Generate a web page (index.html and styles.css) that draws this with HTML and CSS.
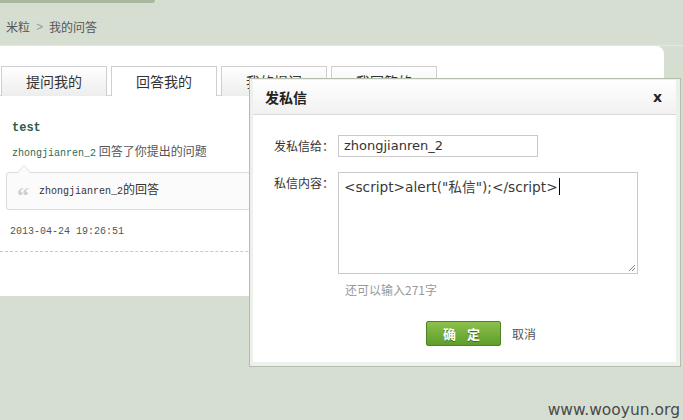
FILE: index.html
```html
<!DOCTYPE html>
<html>
<head>
<meta charset="utf-8">
<link rel="stylesheet" href="styles.css">
</head>
<body>
<div class="topbar"></div>
<div class="crumb"><span>米粒</span><span class="sep">&gt;</span><span>我的问答</span></div>
<div class="panel">
  <div class="tabs">
    <div class="tab">提问我的</div>
    <div class="tab active">回答我的</div>
    <div class="tab">我的提问</div>
    <div class="tab">我回答的</div>
  </div>
  <div class="item">
    <div class="title">test</div>
    <div class="meta"><span class="user">zhongjianren_2</span> 回答了你提出的问题</div>
    <div class="quote">
      <span class="arrow"></span>
      <span class="qmark">“</span><span class="qtext"><span class="mono">zhongjianren_2</span>的回答</span>
    </div>
    <div class="date">2013-04-24 19:26:51</div>
  </div>
</div>

<div class="dialog">
  <div class="dlg-inner">
    <div class="dlg-head">
      <span class="dlg-title">发私信</span>
      <span class="dlg-close">x</span>
    </div>
    <div class="dlg-body">
      <div class="row">
        <span class="label">发私信给：</span>
        <div class="input">zhongjianren_2</div>
      </div>
      <div class="row row2">
        <span class="label">私信内容：</span>
        <div class="textarea">&lt;script&gt;alert("私信");&lt;/script&gt;<span class="caret"></span>
          <svg class="grip" width="8" height="8" viewBox="0 0 8 8"><path d="M1 7 L7 1 M4 7 L7 4" stroke="#888" stroke-width="1" fill="none"/></svg>
        </div>
      </div>
      <div class="count">还可以输入271字</div>
      <div class="actions">
        <span class="btn">确 定</span>
        <span class="cancel">取消</span>
      </div>
    </div>
  </div>
</div>

<div class="wm">www.wooyun.org</div>
</body>
</html>
```
FILE: styles.css
```css
html, body {
  margin: 0;
  padding: 0;
}
body {
  width: 683px;
  height: 420px;
  overflow: hidden;
  background: #d6ded2;
  font-family: "Noto Sans CJK SC", "Liberation Sans", sans-serif;
  color: #333;
  position: relative;
}
.topbar {
  width: 155px;
  height: 3px;
  background: #a8b89e;
  border-bottom-right-radius: 4px;
}
.crumb {
  box-sizing: border-box;
  height: 43px;
  padding: 15px 0 0 6px;
  font-size: 12px;
  line-height: 18px;
  color: #555;
  border-bottom: 1px solid #e3e8e0;
  display: flex;
}
.crumb .sep {
  color: #999;
  font-family: "Liberation Sans", sans-serif;
  margin: 0 6px 0 6px;
}
.panel {
  box-sizing: border-box;
  width: 664px;
  height: 250px;
  background: #fff;
  border-top-right-radius: 8px;
  padding-top: 20px;
}
.tabs {
  display: flex;
  gap: 4px;
  padding-left: 1px;
  height: 30px;
  border-bottom: 1px solid #d4d4d4;
  box-sizing: border-box;
}
.tab {
  box-sizing: border-box;
  width: 106px;
  height: 30px;
  border: 1px solid #cfcfcf;
  border-bottom: none;
  background: linear-gradient(#ffffff, #ededed);
  font-size: 14px;
  line-height: 28px;
  text-align: center;
  color: #333;
}
.tab.active {
  background: #fff;
  margin-bottom: -1px;
}
.item {
  padding: 24px 0 11px 12px;
  border-bottom: 1px dashed #c8c8c8;
}
.title {
  height: 16px;
  font-family: "Liberation Mono", monospace;
  font-weight: bold;
  font-size: 12px;
  line-height: 16px;
  color: #2d5c4e;
}
.meta {
  height: 16px;
  margin-top: 7px;
  font-size: 12px;
  line-height: 16px;
  color: #555;
}
.user, .mono {
  font-family: "Liberation Mono", monospace;
  font-size: 10px;
}
.user {
  color: #2e6a58;
}
.quote {
  position: relative;
  box-sizing: border-box;
  margin: 13px 0 0 -6px;
  width: 620px;
  height: 38px;
  border: 1px solid #dcdcdc;
  border-radius: 3px;
  background: #fbfbfb;
  display: flex;
  align-items: center;
  padding-left: 10px;
  font-size: 12px;
  color: #333;
}
.arrow {
  position: absolute;
  left: 10px;
  top: -8px;
  width: 0;
  height: 0;
  border-left: 7px solid transparent;
  border-right: 7px solid transparent;
  border-bottom: 8px solid #dcdcdc;
}
.arrow::after {
  content: "";
  position: absolute;
  left: -6px;
  top: 1px;
  border-left: 6px solid transparent;
  border-right: 6px solid transparent;
  border-bottom: 7px solid #fbfbfb;
}
.qmark {
  font-family: "Liberation Serif", serif;
  font-weight: bold;
  font-size: 24px;
  color: #cfcfcf;
  width: 22px;
  height: 16px;
  line-height: 24px;
}
.qtext {
  line-height: 16px;
  margin-top: -2px;
}
.date {
  height: 16px;
  margin-top: 14px;
  font-family: "Liberation Mono", monospace;
  font-size: 10px;
  line-height: 16px;
  color: #555;
  margin-left: -2px;
}

/* dialog */
.dialog {
  position: absolute;
  left: 249px;
  top: 78px;
  width: 432px;
  height: 289px;
  box-sizing: border-box;
  border: 1px solid #b3bdae;
  background: #eef0ec;
  padding: 1px 4px 4px 3px;
}
.dlg-inner {
  background: #fff;
  height: 100%;
}
.dlg-head {
  box-sizing: border-box;
  height: 35px;
  border-bottom: 1px solid #dadada;
  background: linear-gradient(#ffffff, #f1f1f1);
  display: flex;
  justify-content: space-between;
  align-items: center;
  padding: 0 14px 0 12px;
}
.dlg-title {
  font-size: 14px;
  font-weight: bold;
  color: #222;
}
.dlg-close {
  font-family: "DejaVu Sans", sans-serif;
  font-weight: bold;
  font-size: 14px;
  color: #222;
}
.dlg-body {
  padding: 20px 0 0 21px;
}
.row {
  display: flex;
  align-items: flex-start;
}
.row2 {
  margin-top: 15px;
}
.label {
  width: 64px;
  font-size: 12px;
  line-height: 22px;
  color: #333;
}
.input {
  box-sizing: border-box;
  width: 200px;
  height: 22px;
  border: 1px solid #c9c9c9;
  padding-left: 5px;
  font-family: "DejaVu Sans", sans-serif;
  font-size: 13px;
  line-height: 20px;
  color: #333;
}
.textarea {
  position: relative;
  box-sizing: border-box;
  width: 300px;
  height: 102px;
  border: 1px solid #c9c9c9;
  padding: 4px 5px;
  font-family: "DejaVu Sans", "Noto Sans CJK SC", sans-serif;
  font-size: 13.7px;
  line-height: 20px;
  color: #3a3a3a;
  white-space: nowrap;
}
.caret {
  display: inline-block;
  width: 1px;
  height: 17px;
  background: #000;
  vertical-align: -3px;
  margin-left: 1px;
}
.grip {
  position: absolute;
  right: 1px;
  bottom: 1px;
}
.count {
  margin: 8px 0 0 71px;
  font-size: 12px;
  line-height: 16px;
  color: #999;
}
.actions {
  margin: 23px 0 0 152px;
  display: flex;
  align-items: center;
  gap: 11px;
}
.btn {
  box-sizing: border-box;
  width: 75px;
  height: 25px;
  border: 1px solid #4d8421;
  border-radius: 2px;
  background: linear-gradient(#8cc04c, #5f9d2a);
  color: #fff;
  font-weight: bold;
  font-size: 13px;
  line-height: 23px;
  text-align: center;
  letter-spacing: 4px;
  text-shadow: 0 1px 0 #3f6f18;
}
.cancel {
  font-size: 12px;
  color: #555;
}
.wm {
  position: absolute;
  right: 3px;
  bottom: 1px;
  font-family: "DejaVu Sans", sans-serif;
  font-size: 15.5px;
  line-height: 18px;
  color: #4a4a4a;
}
```
